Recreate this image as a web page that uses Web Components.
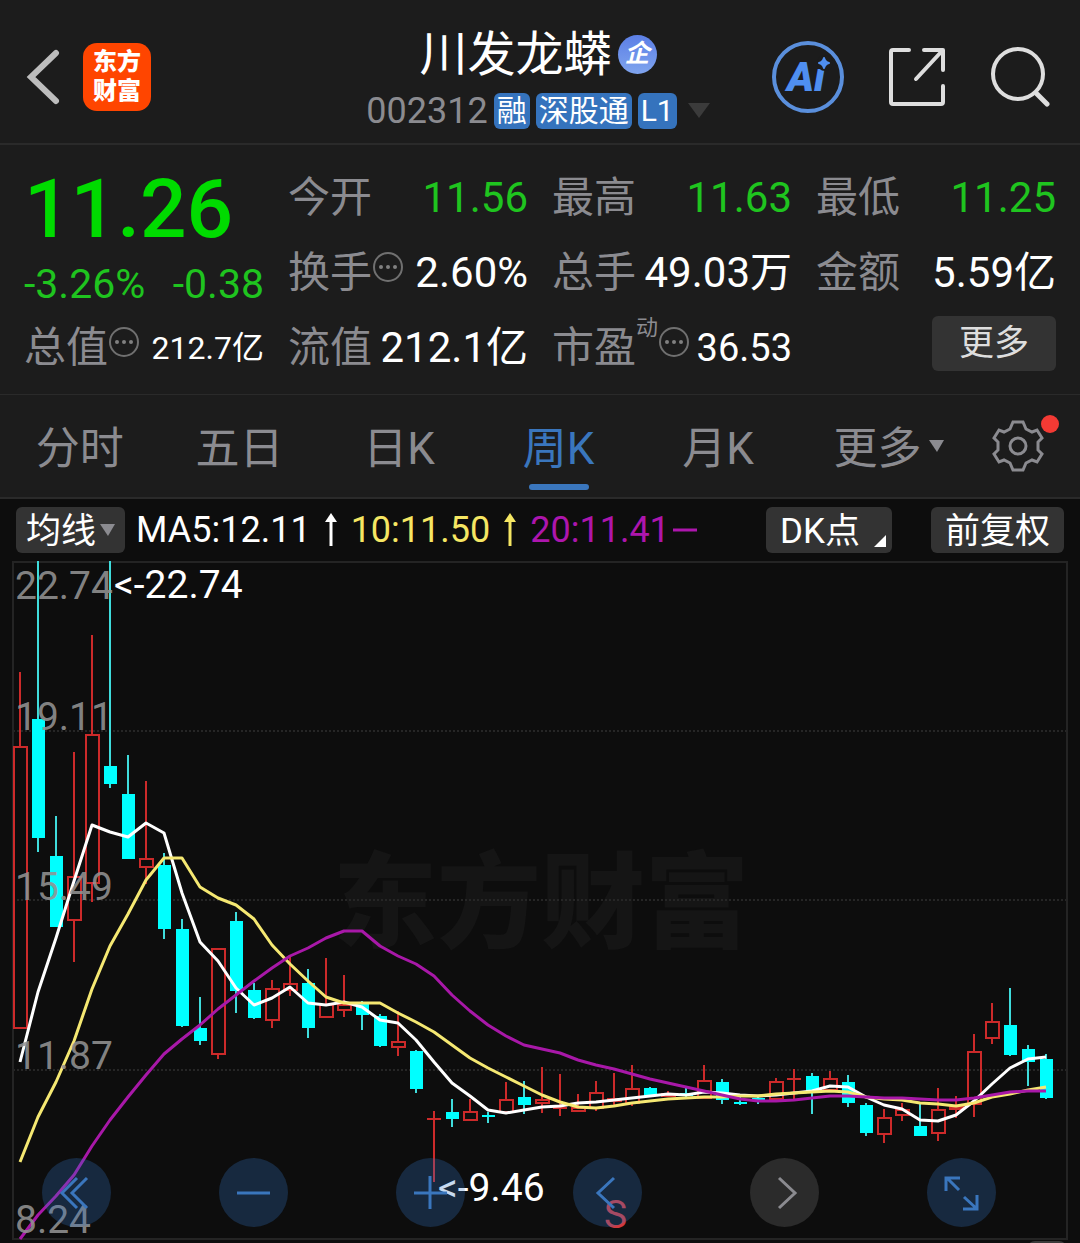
<!DOCTYPE html>
<html lang="zh-CN">
<head>
<meta charset="utf-8">
<meta name="viewport" content="width=device-width, initial-scale=1">
<title>川发龙蟒 002312</title>
<style>
  :root {
    --panel: #1c1c1c;
    --chart: #0d0d0d;
    --line: #2a2a2a;
    --chip: #333333;
    --muted: #8b8b90;
    --blue: #3a76bd;
    --green: #1fc41f;
  }
  body {
    margin: 0;
    background: var(--chart);
    color: #fff;
    font-family: Roboto, "Noto Sans CJK SC", sans-serif;
  }
</style>
</head>
<body>
<stock-page></stock-page>

<script>
// components/stock-header.js

class StockHeader extends HTMLElement {
  constructor() {
    super();
    this.attachShadow({ mode: 'open' });
    this.render();
  }

  render() {
    this.shadowRoot.innerHTML = `
      <style>
        :host {
          display: grid;
          grid-template-columns: 1fr auto 1fr;
          align-items: center;
          box-sizing: border-box;
          height: 145px;
          padding: 11px 30px 0 26px;
          background: var(--panel);
          border-bottom: 2px solid var(--line);
        }
        button { padding: 0; border: 0; background: none; font: inherit; color: inherit; }
        svg { display: block; }
        .left { display: flex; align-items: center; gap: 23px; }
        .logo {
          width: 68px;
          height: 68px;
          box-sizing: border-box;
          padding-top: 5px;
          border-radius: 14px;
          background: #ff4500;
          font-size: 24px;
          line-height: 29px;
          font-weight: 900;
          text-align: center;
        }
        .center { display: flex; flex-direction: column; align-items: center; gap: 11px; }
        h1 {
          display: flex;
          align-items: center;
          gap: 6px;
          margin: 0;
          padding-top: 2px;
          font-size: 48px;
          line-height: 54px;
          font-weight: 400;
        }
        .corp {
          width: 39px;
          height: 39px;
          border-radius: 50%;
          background: linear-gradient(#5c7fe6, #7fa4ee);
          font-size: 25px;
          line-height: 38px;
          font-weight: 700;
          font-style: italic;
          text-align: center;
        }
        .sub { display: flex; align-items: center; gap: 6px; height: 36px; }
        .code { font-size: 36px; line-height: 36px; color: var(--muted); }
        .tag {
          padding: 0 3px;
          border-radius: 6px;
          background: #3573bd;
          font-size: 30px;
          line-height: 36px;
        }
        .sub svg { margin-left: 5px; }
        .right { display: flex; align-items: center; justify-content: flex-end; gap: 44px; }
      </style>
      <div class="left">
        <button aria-label="返回">
          <svg width="34" height="58" viewBox="0 0 34 58"><path d="M30 5 5 29 30 53" fill="none" stroke="#bdbdbd" stroke-width="6" stroke-linecap="round"/></svg>
        </button>
        <div class="logo">东方<br>财富</div>
      </div>
      <div class="center">
        <h1><span>川发龙蟒</span><span class="corp">企</span></h1>
        <div class="sub">
          <span class="code">002312</span>
          <span class="tag">融</span>
          <span class="tag">深股通</span>
          <span class="tag">L1</span>
          <svg width="22" height="15" viewBox="0 0 22 15"><path d="M0 0H22L11 15Z" fill="#3b3b3b"/></svg>
        </div>
      </div>
      <div class="right">
        <button aria-label="AI">
          <svg width="72" height="72" viewBox="0 0 72 72">
            <circle cx="36" cy="36" r="34" fill="none" stroke="#5a8fdc" stroke-width="4"/>
            <text x="15" y="50" font-size="41" font-weight="900" font-style="italic" fill="#4f8ff0">Ai</text>
            <circle cx="53" cy="22" r="8" fill="#1c1c1c"/>
            <path d="M52 17Q53 21 57 22Q53 23 52 27Q51 23 47 22Q51 21 52 17Z" fill="#4f8ff0" stroke="#4f8ff0" stroke-width="2" stroke-linejoin="round"/>
          </svg>
        </button>
        <button aria-label="分享">
          <svg width="58" height="60" viewBox="0 0 58 60" fill="none" stroke="#dedede" stroke-width="4" stroke-linecap="round" stroke-linejoin="round">
            <path d="M21 3H5Q3 3 3 5V55Q3 57 5 57H53Q55 57 55 55V39M36 3H55V23M54 4 28 32"/>
          </svg>
        </button>
        <button aria-label="搜索">
          <svg width="60" height="62" viewBox="0 0 60 62" fill="none" stroke="#dedede" stroke-width="4" stroke-linecap="round">
            <circle cx="28" cy="28" r="25"/><path d="M47 48 57 58" stroke-width="5"/>
          </svg>
        </button>
      </div>
    `;
  }
}

customElements.define('stock-header', StockHeader);

// components/quote-item.js
// label on the left, value on the right; "info" adds the round dots icon

class QuoteItem extends HTMLElement {
  constructor() {
    super();
    this.attachShadow({ mode: 'open' });
  }

  connectedCallback() {
    const label = this.getAttribute('label');
    const sup = this.getAttribute('sup');
    const info = this.hasAttribute('info');
    this.shadowRoot.innerHTML = `
      <style>
        :host {
          display: flex;
          align-items: center;
          justify-content: space-between;
          height: 75px;
          font-size: 42px;
          line-height: 50px;
          white-space: nowrap;
        }
        .label { display: flex; align-items: center; color: var(--muted); }
        sup { align-self: flex-start; margin-top: -7px; font-size: 22px; line-height: 24px; }
        svg { margin: 0 0 12px 1px; }
        :host([tone="down"]) .value { color: var(--green); }
        :host([size="m"]) .value { font-size: 38px; }
        :host([size="s"]) .value { font-size: 32px; }
      </style>
      <span class="label">${label}${sup ? `<sup>${sup}</sup>` : ''}${info ? `
        <svg width="30" height="30" viewBox="0 0 30 30">
          <circle cx="15" cy="15" r="14" fill="none" stroke="#707070" stroke-width="2"/>
          <g fill="#808080"><circle cx="8" cy="15" r="2"/><circle cx="15" cy="15" r="2"/><circle cx="22" cy="15" r="2"/></g>
        </svg>` : ''}</span>
      <span class="value"><slot></slot></span>
    `;
  }
}

customElements.define('quote-item', QuoteItem);

// components/quote-panel.js

class QuotePanel extends HTMLElement {
  constructor() {
    super();
    this.attachShadow({ mode: 'open' });
    this.render();
  }

  render() {
    this.shadowRoot.innerHTML = `
      <style>
        :host {
          display: grid;
          grid-template-columns: repeat(4, minmax(0, 1fr));
          grid-template-rows: repeat(3, 75px);
          column-gap: 24px;
          padding: 15px 24px 9px;
          background: var(--panel);
          border-bottom: 1px solid var(--line);
        }
        .price { grid-row: span 2; display: flex; flex-direction: column; }
        .now {
          padding-top: 4px;
          font-size: 82px;
          line-height: 90px;
          font-weight: 500;
          color: #00db00;
        }
        .change {
          display: flex;
          justify-content: space-between;
          font-size: 41px;
          line-height: 60px;
          color: var(--green);
        }
        button {
          justify-self: end;
          width: 124px;
          height: 55px;
          margin-top: 6px;
          padding: 0;
          border: 0;
          border-radius: 6px;
          background: var(--chip);
          color: #dedede;
          font: 35px/55px Roboto, "Noto Sans CJK SC", sans-serif;
        }
      </style>
      <div class="price">
        <div class="now">11.26</div>
        <div class="change"><span>-3.26%</span><span>-0.38</span></div>
      </div>
      <quote-item label="今开" tone="down">11.56</quote-item>
      <quote-item label="最高" tone="down">11.63</quote-item>
      <quote-item label="最低" tone="down">11.25</quote-item>
      <quote-item label="换手" info>2.60%</quote-item>
      <quote-item label="总手">49.03万</quote-item>
      <quote-item label="金额">5.59亿</quote-item>
      <quote-item label="总值" info size="s">212.7亿</quote-item>
      <quote-item label="流值">212.1亿</quote-item>
      <quote-item label="市盈" sup="动" info size="m">36.53</quote-item>
      <button>更多</button>
    `;
  }
}

customElements.define('quote-panel', QuotePanel);

// components/period-tabs.js

class PeriodTabs extends HTMLElement {
  constructor() {
    super();
    this.attachShadow({ mode: 'open' });
    this.render();
  }

  render() {
    const tabs = ['分时', '五日', '日K', '周K', '月K'];
    this.shadowRoot.innerHTML = `
      <style>
        :host {
          display: flex;
          height: 102px;
          padding-right: 24px;
          background: var(--panel);
          border-bottom: 2px solid var(--line);
        }
        button {
          display: flex;
          align-items: center;
          justify-content: center;
          position: relative;
          padding: 0;
          border: 0;
          background: none;
          color: var(--muted);
          font: 44px/52px Roboto, "Noto Sans CJK SC", sans-serif;
        }
        .tab { flex: 1; padding-top: 6px; }
        .more { width: 182px; gap: 8px; padding-top: 6px; }
        .more svg { margin-bottom: 6px; }
        .settings { width: 76px; }
        .active { color: var(--blue); }
        .active::after {
          content: "";
          position: absolute;
          bottom: 7px;
          width: 60px;
          height: 6px;
          border-radius: 3px;
          background: var(--blue);
        }
        .dot {
          position: absolute;
          top: 20px;
          right: -3px;
          width: 18px;
          height: 18px;
          border-radius: 50%;
          background: #f33a34;
        }
      </style>
      ${tabs.map((t) => `<button class="tab${t === '周K' ? ' active' : ''}">${t}</button>`).join('')}
      <button class="more">更多<svg width="15" height="12" viewBox="0 0 15 12"><path d="M0 0H15L8 12Z" fill="#8b8b90"/></svg></button>
      <button class="settings" aria-label="设置">
        <svg width="54" height="54" viewBox="-27 -27 54 54" fill="none" stroke="#8b8b90" stroke-width="3">
          <path d="M-5-24H5L8-17L14-14L19-16L24-8L20-4V4L24 8L19 16L14 14L8 17L5 24H-5L-8 17L-14 14L-19 16L-24 8L-20 4V-4L-24-8L-19-16L-14-14L-8-17Z"/>
          <circle r="8"/>
        </svg>
        <span class="dot"></span>
      </button>
    `;
  }
}

customElements.define('period-tabs', PeriodTabs);

// components/ma-value.js

const TRENDS = {
  up: '<svg width="12" height="34" viewBox="0 0 12 34"><path d="M6 3V33" stroke="currentColor" stroke-width="3"/><path d="M0 9 6 0 12 9Z" fill="currentColor"/></svg>',
  flat: '<svg width="24" height="4" viewBox="0 0 24 4"><path d="M0 2H24" stroke="currentColor" stroke-width="3"/></svg>',
};

class MaValue extends HTMLElement {
  constructor() {
    super();
    this.attachShadow({ mode: 'open' });
  }

  connectedCallback() {
    this.shadowRoot.innerHTML = `
      <style>
        :host { display: flex; align-items: center; gap: 14px; white-space: nowrap; }
        :host([trend="flat"]) { gap: 3px; }
      </style>
      <span><slot></slot></span>${TRENDS[this.getAttribute('trend')]}
    `;
  }
}

customElements.define('ma-value', MaValue);

// components/chart-toolbar.js

class ChartToolbar extends HTMLElement {
  constructor() {
    super();
    this.attachShadow({ mode: 'open' });
    this.render();
  }

  render() {
    this.shadowRoot.innerHTML = `
      <style>
        :host {
          display: flex;
          align-items: center;
          height: 62px;
          padding: 0 16px;
          font-size: 36px;
          line-height: 48px;
        }
        button {
          display: flex;
          align-items: center;
          box-sizing: border-box;
          height: 46px;
          padding: 3px 14px 0;
          border: 0;
          border-radius: 6px;
          background: var(--chip);
          color: #fff;
          font: 35px/43px Roboto, "Noto Sans CJK SC", sans-serif;
        }
        .line { gap: 4px; padding: 3px 10px 0; }
        .line svg { margin-bottom: 3px; }
        .values { display: flex; gap: 14px; margin: 0 auto 0 11px; }
        .dk { gap: 14px; padding: 3px 6px 0 14px; margin-right: 39px; }
        .dk svg { align-self: flex-end; margin-bottom: 6px; }
      </style>
      <button class="line">均线<svg width="15" height="12" viewBox="0 0 15 12"><path d="M0 0H15L8 12Z" fill="#8b8b90"/></svg></button>
      <div class="values">
        <ma-value trend="up">MA5:12.11</ma-value>
        <ma-value trend="up" style="color: #f5e663">10:11.50</ma-value>
        <ma-value trend="flat" style="color: #ad16ad">20:11.41</ma-value>
      </div>
      <button class="dk">DK点<svg width="12" height="12" viewBox="0 0 12 12"><path d="M12 0V12H0Z" fill="#fff"/></svg></button>
      <button>前复权</button>
    `;
  }
}

customElements.define('chart-toolbar', ChartToolbar);

// components/k-chart.js
// All values below are in chart units: one candle every 18, y grows downwards.

const STEP = 18;
const FIRST = 20;

// [up/down, high, body top, body bottom, low]
const CANDLES = [
  ['u', 111, 186, 467, 467], ['d', 0, 158, 277, 291], ['d', 255, 295, 366, 366], ['u', 191, 316, 359, 401],
  ['u', 74, 174, 322, 341], ['d', 0, 205, 223, 227], ['d', 194, 233, 298, 298], ['u', 220, 298, 306, 323],
  ['d', 292, 304, 368, 378], ['d', 358, 368, 465, 466], ['d', 436, 467, 480, 484], ['u', 388, 388, 493, 498],
  ['d', 351, 360, 430, 452], ['d', 422, 429, 457, 458], ['u', 419, 428, 459, 467], ['u', 394, 423, 429, 435],
  ['d', 408, 422, 467, 477], ['u', 397, 444, 456, 456], ['u', 414, 444, 449, 456], ['d', 440, 443, 454, 469],
  ['d', 453, 455, 485, 486], ['u', 450, 481, 486, 495], ['d', 489, 490, 528, 532], ['u', 550, 558, 558, 621],
  ['d', 538, 551, 558, 566], ['u', 538, 551, 559, 560], ['d', 551, 554, 554, 562], ['u', 521, 539, 551, 551],
  ['d', 520, 536, 544, 553], ['u', 506, 539, 542, 552], ['u', 513, 547, 547, 555], ['u', 533, 547, 550, 550],
  ['u', 520, 532, 547, 550], ['u', 512, 538, 540, 546], ['u', 504, 528, 542, 545], ['d', 526, 527, 535, 535],
  ['u', 530, 533, 535, 536], ['d', 525, 532, 535, 536], ['u', 504, 520, 537, 537], ['d', 518, 521, 539, 543],
  ['d', 536, 541, 541, 544], ['d', 536, 537, 539, 543], ['u', 517, 521, 538, 540], ['u', 508, 518, 518, 539],
  ['d', 512, 515, 531, 553], ['u', 510, 518, 529, 529], ['d', 514, 521, 542, 546], ['d', 542, 544, 572, 575],
  ['u', 548, 557, 573, 582], ['u', 542, 549, 554, 560], ['d', 543, 565, 575, 575], ['u', 527, 549, 572, 580],
  ['u', 535, 546, 548, 557], ['u', 473, 491, 543, 556], ['u', 442, 461, 477, 483], ['d', 427, 464, 494, 495],
  ['d', 484, 488, 501, 525], ['d', 493, 498, 537, 538],
];

const MA5 = [501, 431, 377, 320, 264, 271, 276, 262, 272, 332, 381, 400, 427, 444, 437, 426, 442, 444, 441, 446,
  459, 462, 479, 501, 522, 535, 549, 552, 549, 546, 545, 542, 541, 539, 537, 535, 533, 534, 531, 532,
  534, 535, 534, 532, 530, 525, 526, 536, 544, 548, 559, 560, 554, 540, 523, 507, 498, 496];

const MA10 = [601, 556, 521, 480, 428, 385, 353, 319, 297, 297, 326, 337, 344, 358, 384, 403, 420, 436, 442, 442,
  442, 452, 461, 471, 484, 497, 507, 516, 525, 534, 541, 546, 547, 545, 542, 540, 538, 537, 536, 536,
  535, 535, 533, 532, 531, 530, 531, 536, 538, 539, 542, 543, 545, 542, 536, 533, 529, 526];

const MA20 = [678, 654, 635, 614, 585, 559, 536, 514, 493, 478, 464, 448, 434, 420, 407, 395, 387, 377, 370, 370,
  385, 395, 403, 415, 434, 450, 464, 475, 484, 488, 492, 499, 504, 508, 513, 518, 522, 526, 530, 534,
  538, 540, 540, 539, 537, 535, 535, 536, 537, 537, 538, 539, 539, 537, 534, 531, 530, 530];

const SCALE = [['22.74', 38], ['19.11', 169], ['15.49', 339], ['11.87', 508], ['8.24', 672]];

const CONTROLS = [
  ['最早', '', 'M35 20 20 35 35 50M45 20 30 35 45 50'],
  ['缩小', '', 'M18 35H51'],
  ['放大', '', 'M18 35H51M34 18V51'],
  ['向前', '', 'M41 20 25 35 41 50'],
  ['向后', 'off', 'M29 20 45 35 29 50'],
  ['全屏', '', 'M33 20H19V33M20 20 32 32M37 39 50 51M36 51H50V37'],
];

class KChart extends HTMLElement {
  constructor() {
    super();
    this.attachShadow({ mode: 'open' });
    this.render();
  }

  candle([dir, high, top, bottom, low], i) {
    const x = FIRST + i * STEP;
    if (dir === 'd') {
      const h = Math.max(bottom - top, 2);
      return `<path class="wick down" d="M${x} ${high}V${low}"/><rect class="body" x="${x - 6}" y="${top}" width="13" height="${h}"/>`;
    }
    if (top === bottom) {
      return `<path class="wick up" d="M${x} ${high}V${low}M${x - 7} ${top}H${x + 7}"/>`;
    }
    return `<path class="wick up" d="M${x} ${high}V${top}M${x} ${bottom}V${low}M${x - 6} ${top}H${x + 7}V${bottom}H${x - 6}Z"/>`;
  }

  line(values, color) {
    const points = values.map((y, i) => `${FIRST + i * STEP},${y}`).join(' ');
    return `<polyline points="${points}" fill="none" stroke="${color}" stroke-width="3" stroke-linejoin="round"/>`;
  }

  render() {
    this.shadowRoot.innerHTML = `
      <style>
        :host { display: block; position: relative; background: var(--chart); }
        .plot { display: block; width: 100%; }
        .plot text { font-size: 39px; }
        .plot .watermark { font-size: 104px; font-weight: 900; fill: #151515; }
        .grid { stroke: #262626; stroke-width: 2; stroke-dasharray: 2 2; }
        .wick { fill: none; stroke-width: 2; }
        .up { stroke: #cc2a2a; }
        .down { stroke: #3fdcdc; }
        .body { fill: #00ffff; }
        /* floats over the bottom of the plot */
        .controls {
          position: absolute;
          left: 0;
          right: 0;
          bottom: 16px;
          display: flex;
          justify-content: space-between;
          padding: 0 84px 0 42px;
        }
        .controls button {
          width: 69px;
          height: 69px;
          padding: 0;
          border: 0;
          border-radius: 50%;
          background: rgba(52, 120, 200, 0.27);
          color: var(--blue);
        }
        .controls .off { background: rgba(80, 80, 80, 0.45); color: #8b8b90; }
        .controls svg { display: block; }
      </style>
      <svg class="plot" viewBox="0 0 1080 682">
        <text class="watermark" x="333" y="379">东方财富</text>
        <path class="grid" d="M13 170H1067M13 339H1067M13 509H1067"/>
        <rect x="13" y="1" width="1054" height="677" fill="none" stroke="#242424" stroke-width="2"/>
        <rect x="1027" y="680" width="40" height="20" rx="8" fill="#3a3a3a"/>
        ${CANDLES.map((c, i) => this.candle(c, i)).join('')}
        ${this.line(MA5, '#ffffff')}
        ${this.line(MA10, '#f5e872')}
        ${this.line(MA20, '#a818a8')}
        <g fill="#929292" fill-opacity="0.9">
          ${SCALE.map(([label, y]) => `<text x="15" y="${y}">${label}</text>`).join('')}
        </g>
        <text x="114" y="37" fill="#fff">&lt;-22.74</text>
        <text x="438" y="640" fill="#fff">&lt;-9.46</text>
        <text x="604" y="667" fill="#d03a40">S</text>
      </svg>
      <div class="controls">
        ${CONTROLS.map(([name, cls, d]) => `
          <button class="${cls}" aria-label="${name}">
            <svg width="69" height="69" viewBox="0 0 69 69"><path d="${d}" fill="none" stroke="currentColor" stroke-width="3"/></svg>
          </button>`).join('')}
      </div>
    `;
  }
}

customElements.define('k-chart', KChart);

// components/stock-page.js

class StockPage extends HTMLElement {
  constructor() {
    super();
    this.attachShadow({ mode: 'open' });
    this.shadowRoot.innerHTML = `
      <style>
        :host { display: flex; flex-direction: column; }
      </style>
      <stock-header></stock-header>
      <quote-panel></quote-panel>
      <period-tabs></period-tabs>
      <chart-toolbar></chart-toolbar>
      <k-chart></k-chart>
    `;
  }
}

customElements.define('stock-page', StockPage);
</script>
</body>
</html>
